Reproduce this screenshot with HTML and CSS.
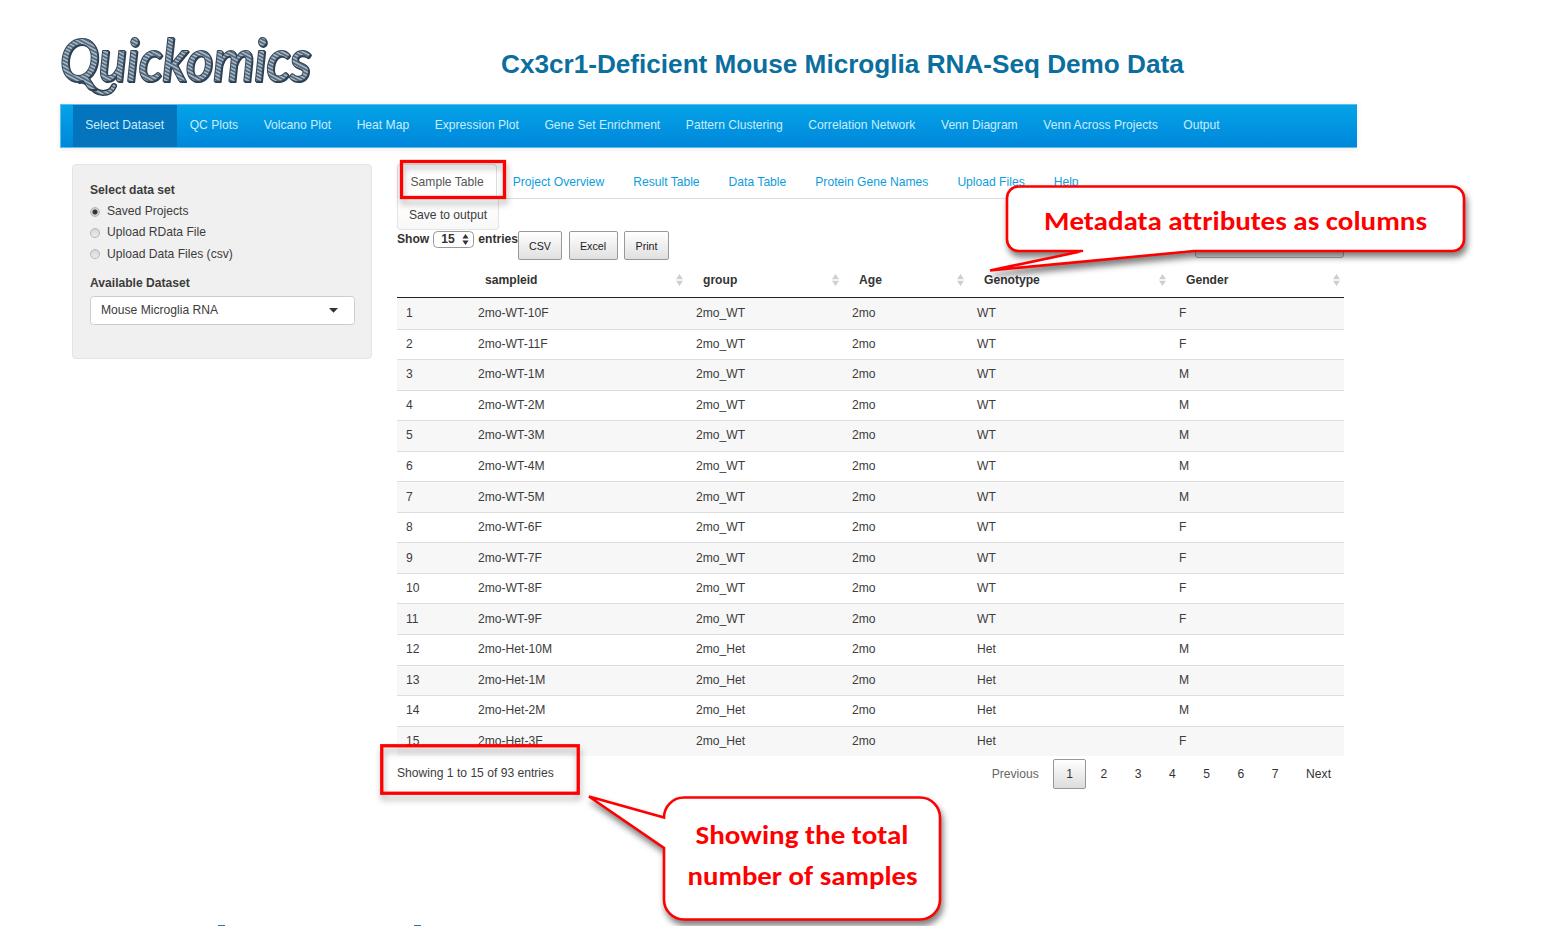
FILE: index.html
```html
<!DOCTYPE html>
<html lang="en">
<head>
<meta charset="utf-8">
<title>Quickomics</title>
<link rel="stylesheet" href="styles.css">
</head>
<body>
<div class="page">
  <header class="header">
    <svg class="logo" width="266" height="76" viewBox="-3 0 266 76">
      <defs>
        <pattern id="rope" width="3.2" height="3.2" patternUnits="userSpaceOnUse" patternTransform="rotate(28)">
          <rect width="3.2" height="3.2" fill="#54687c"/>
          <rect width="3.2" height="1.4" fill="#b0c0cd"/>
        </pattern>
      </defs>
      <path d="M20 54C29 51 31 66 43 66Q51 66 54 59" fill="none" stroke="#2c3e50" stroke-width="6" stroke-linecap="round"/>
      <path d="M20 54C29 51 31 66 43 66Q51 66 54 59" fill="none" stroke="url(#rope)" stroke-width="3.2" stroke-linecap="round"/>
      <text class="logo-text" x="0" y="54" textLength="251" lengthAdjust="spacingAndGlyphs">Quickomics</text>
    </svg>
    <h1 class="title">Cx3cr1-Deficient Mouse Microglia RNA-Seq Demo Data</h1>
  </header>

  <nav class="navbar">
    <a class="nav-item active">Select Dataset</a><a class="nav-item">QC Plots</a><a class="nav-item">Volcano Plot</a><a class="nav-item">Heat Map</a><a class="nav-item">Expression Plot</a><a class="nav-item">Gene Set Enrichment</a><a class="nav-item">Pattern Clustering</a><a class="nav-item">Correlation Network</a><a class="nav-item">Venn Diagram</a><a class="nav-item">Venn Across Projects</a><a class="nav-item">Output</a>
  </nav>

  <div class="content">
    <aside class="panel">
      <div class="label">Select data set</div>
      <div class="option"><span class="radio checked"></span>Saved Projects</div>
      <div class="option"><span class="radio"></span>Upload RData File</div>
      <div class="option"><span class="radio"></span>Upload Data Files (csv)</div>
      <div class="label dataset-label">Available Dataset</div>
      <div class="dropdown">Mouse Microglia RNA<svg width="9" height="5" viewBox="0 0 9 5"><path d="M0 0H9L4.5 4.8Z" fill="#333"/></svg></div>
    </aside>

    <main class="main">
      <div class="tabs">
        <a class="tab current">Sample Table</a><a class="tab">Project Overview</a><a class="tab">Result Table</a><a class="tab">Data Table</a><a class="tab">Protein Gene Names</a><a class="tab">Upload Files</a><a class="tab">Help</a>
      </div>
      <div class="save">Save to output</div>
      <div class="toolbar">
        <div class="length">Show <span class="count">15<svg width="7" height="11" viewBox="0 0 7 11"><path d="M3.5 0L6.6 4.5H.4ZM3.5 11L.4 6.5H6.6Z" fill="#333"/></svg></span> entries</div>
        <div class="btn csv">CSV</div><div class="btn excel">Excel</div><div class="btn print">Print</div>
        <div class="search"></div>
      </div>
      <table class="grid">
        <colgroup><col class="c-num"><col class="c-id"><col class="c-group"><col class="c-age"><col class="c-geno"><col class="c-gender"></colgroup>
        <thead><tr><th></th><th><div class="head">sampleid<span class="sort"></span></div></th><th><div class="head">group<span class="sort"></span></div></th><th><div class="head">Age<span class="sort"></span></div></th><th><div class="head">Genotype<span class="sort"></span></div></th><th><div class="head">Gender<span class="sort"></span></div></th></tr></thead>
        <tbody>
          <tr><td>1</td><td>2mo-WT-10F</td><td>2mo_WT</td><td>2mo</td><td>WT</td><td>F</td></tr>
          <tr><td>2</td><td>2mo-WT-11F</td><td>2mo_WT</td><td>2mo</td><td>WT</td><td>F</td></tr>
          <tr><td>3</td><td>2mo-WT-1M</td><td>2mo_WT</td><td>2mo</td><td>WT</td><td>M</td></tr>
          <tr><td>4</td><td>2mo-WT-2M</td><td>2mo_WT</td><td>2mo</td><td>WT</td><td>M</td></tr>
          <tr><td>5</td><td>2mo-WT-3M</td><td>2mo_WT</td><td>2mo</td><td>WT</td><td>M</td></tr>
          <tr><td>6</td><td>2mo-WT-4M</td><td>2mo_WT</td><td>2mo</td><td>WT</td><td>M</td></tr>
          <tr><td>7</td><td>2mo-WT-5M</td><td>2mo_WT</td><td>2mo</td><td>WT</td><td>M</td></tr>
          <tr><td>8</td><td>2mo-WT-6F</td><td>2mo_WT</td><td>2mo</td><td>WT</td><td>F</td></tr>
          <tr><td>9</td><td>2mo-WT-7F</td><td>2mo_WT</td><td>2mo</td><td>WT</td><td>F</td></tr>
          <tr><td>10</td><td>2mo-WT-8F</td><td>2mo_WT</td><td>2mo</td><td>WT</td><td>F</td></tr>
          <tr><td>11</td><td>2mo-WT-9F</td><td>2mo_WT</td><td>2mo</td><td>WT</td><td>F</td></tr>
          <tr><td>12</td><td>2mo-Het-10M</td><td>2mo_Het</td><td>2mo</td><td>Het</td><td>M</td></tr>
          <tr><td>13</td><td>2mo-Het-1M</td><td>2mo_Het</td><td>2mo</td><td>Het</td><td>M</td></tr>
          <tr><td>14</td><td>2mo-Het-2M</td><td>2mo_Het</td><td>2mo</td><td>Het</td><td>M</td></tr>
          <tr><td>15</td><td>2mo-Het-3F</td><td>2mo_Het</td><td>2mo</td><td>Het</td><td>F</td></tr>
        </tbody>
      </table>
      <div class="table-foot">
        <div>Showing 1 to 15 of 93 entries</div>
        <div class="pages"><a class="pg muted">Previous</a><a class="pg on">1</a><a class="pg">2</a><a class="pg">3</a><a class="pg">4</a><a class="pg">5</a><a class="pg">6</a><a class="pg">7</a><a class="pg">Next</a></div>
      </div>
    </main>
  </div>

  <div class="next-heading"><span class="tick"></span><span class="tick"></span></div>

  <svg class="notes" width="1557" height="926" viewBox="0 0 1557 926">
    <g class="frame">
      <rect x="401.5" y="161.5" width="103" height="36"/>
      <rect x="381.75" y="745.75" width="196.5" height="47.5"/>
    </g>
    <g class="balloon">
      <path d="M1018.5 186.5H1452.5A11.5 11.5 0 0 1 1464 198V239.5A11.5 11.5 0 0 1 1452.5 251H1194L990 270.5L1083 251H1018.5A11.5 11.5 0 0 1 1007 239.5V198A11.5 11.5 0 0 1 1018.5 186.5Z"/>
      <path d="M684 797.5H920A20 20 0 0 1 940 817.5V899.5A20 20 0 0 1 920 919.5H684A20 20 0 0 1 664 899.5V848L589 796.5L664 817.5A20 20 0 0 1 684 797.5Z"/>
    </g>
    <path class="tail-gap" d="M1078 253L1095 249.5H1190L1180 251Z"/>
    <g class="note-text">
      <text x="1044" y="230" textLength="383" lengthAdjust="spacingAndGlyphs">Metadata attributes as columns</text>
      <text x="695.5" y="844" textLength="213" lengthAdjust="spacingAndGlyphs">Showing the total</text>
      <text x="687.5" y="885" textLength="230" lengthAdjust="spacingAndGlyphs">number of samples</text>
    </g>
  </svg>
</div>
</body>
</html>
```
FILE: styles.css
```css
* { box-sizing: border-box; }
body { margin: 0; background: #fff; }
.page {
  position: relative;
  width: 1557px;
  height: 926px;
  overflow: hidden;
  display: flex;
  flex-direction: column;
  font: 12.12px/17px "Liberation Sans", Arial, sans-serif;
  color: #3c3c3c;
}
.header { display: flex; height: 104px; padding: 27px 0 0 57px; flex: none; }
.logo { display: block; margin-right: 178px; overflow: visible; flex: none; }
.logo-text {
  font: italic 500 57px Lato, sans-serif;
  fill: url(#rope);
  stroke: #34475a;
  stroke-width: 2.2;
  stroke-linejoin: round;
  paint-order: stroke;
  filter: drop-shadow(1.5px 1px 0 #2c3e50);
}
.title { margin: 21px 0 0; font-size: 26.15px; line-height: 32px; font-weight: 700; color: #0a6f9e; white-space: nowrap; }

.navbar {
  display: flex;
  flex: none;
  width: 1297px;
  height: 44px;
  margin-left: 60px;
  padding-left: 11.5px;
  border: solid #5fbde9;
  border-width: 1px 0 1px 1px;
  background: linear-gradient(#04a3e7, #0087db);
  box-shadow: 0 1px 6px rgba(0, 0, 0, .09);
}
.nav-item { padding: 12px 12.8px 0; color: #c8eefc; white-space: nowrap; }
.nav-item.active { background: #0474bc; }

.content { display: flex; align-items: flex-start; padding: 16px 0 0 72px; height: 650px; flex: none; }
.panel {
  width: 300px;
  height: 195px;
  margin-right: 25px;
  padding: 17px 17px 0;
  border: 1.5px solid #e3e3e3;
  border-radius: 4px;
  background: #f0f0f0;
}
.label { font-weight: 700; line-height: 17px; margin-bottom: 2px; }
.option { display: flex; align-items: center; height: 21.3px; }
.radio { width: 10px; height: 10px; margin-right: 7px; border: 1px solid #b5b5b5; border-radius: 50%; background: linear-gradient(#d6d6d6, #ececec); }
.radio.checked { background: radial-gradient(circle, #333 0 2px, #cfcfcf 3px); }
.dataset-label { margin: 10px 0 4px; }
.dropdown { display: flex; justify-content: space-between; align-items: center; height: 29px; margin-right: -1px; padding: 0 16px 0 10px; border: 1px solid #ccc; border-radius: 3.5px; background: #fff; }

.main { width: 947px; }
.tabs { display: flex; height: 35px; border-bottom: 1px solid #ddd; }
.tab { padding: 9px 12.5px 0; margin-right: 2px; border: 1px solid transparent; border-bottom: 0; color: #0d9ddd; white-space: nowrap; }
.tab.current { height: 35px; color: #555; border-color: #ddd; border-radius: 3.5px 3.5px 0 0; background: #fff; }
.save { width: 102px; height: 31px; padding-top: 8px; text-align: center; border: 1px solid #e3e3e3; border-top: 0; border-radius: 0 0 4px 4px; background: linear-gradient(#fff, #f8f8f8); }
.toolbar { display: flex; height: 33px; }
.length { display: flex; width: 121px; height: 19px; align-items: center; font-weight: 700; color: #333; white-space: nowrap; }
.count { display: flex; justify-content: space-between; align-items: center; width: 42px; height: 17px; margin: 0 4px; padding: 0 4px 0 7px; border: 1px solid #999; border-radius: 4.5px; background: #fff; }
.btn { height: 29px; margin: 1px 6.5px 0 0; border: 1px solid #999; border-radius: 2px; background: linear-gradient(#fff, #e0e0e0); font-size: 10.7px; line-height: 29px; text-align: center; color: #222; }
.csv { width: 44px; }
.excel { width: 49px; }
.print { width: 45px; }
.search { width: 149px; height: 28px; margin-left: auto; border: 1px solid #aaa; border-radius: 3px; background: #f0f0f0; }

.grid { width: 947px; border-collapse: separate; border-spacing: 0; table-layout: fixed; }
.c-num { width: 72px; }
.c-id { width: 218px; }
.c-group { width: 156px; }
.c-age { width: 125px; }
.c-geno { width: 202px; }
.c-gender { width: 174px; }
.grid th { height: 35px; padding: 0; border-bottom: 1.5px solid #222; color: #333; }
.head { display: flex; align-items: center; justify-content: space-between; padding: 0 4px 0 16px; }
.sort { width: 7px; height: 12px; background: #cfcfcf; clip-path: polygon(50% 0, 100% 44%, 0 44%, 0 56%, 100% 56%, 50% 100%, 0 56%, 0 44%); }
.grid td { height: 30.56px; padding: 0 9px; border-top: 1px solid #ddd; }
.grid tbody tr:first-child td { border-top: 0; }
.grid tbody tr:nth-child(odd) { background: #f7f7f7; }
.table-foot { display: flex; justify-content: space-between; padding-top: 3px; line-height: 29px; }
.pages { display: flex; }
.pg { height: 30px; margin-left: 1.5px; padding: 0 12px; border: 1px solid transparent; border-radius: 2px; line-height: 29px; color: #333; }
.pg.on { border-color: #979797; background: linear-gradient(#fff, #dcdcdc); }
.pg.muted { color: #666; }

.next-heading { display: flex; gap: 189px; margin-top: auto; padding-left: 218px; height: 1px; }
.tick { width: 7px; height: 1px; background: #2e74b5; }

.notes { position: absolute; left: 0; top: 0; }
.frame { fill: none; stroke: #f00; stroke-width: 3.3px; filter: drop-shadow(1px 5px 3px rgba(0, 0, 0, .3)); }
.balloon { fill: #fff; stroke: #f00; stroke-width: 2.6px; filter: drop-shadow(2px 5px 3px rgba(0, 0, 0, .5)); }
.tail-gap { fill: #fff; }
.note-text { font: 700 26px Carlito, Lato, sans-serif; font-variant-ligatures: none; fill: #f00; }
```
